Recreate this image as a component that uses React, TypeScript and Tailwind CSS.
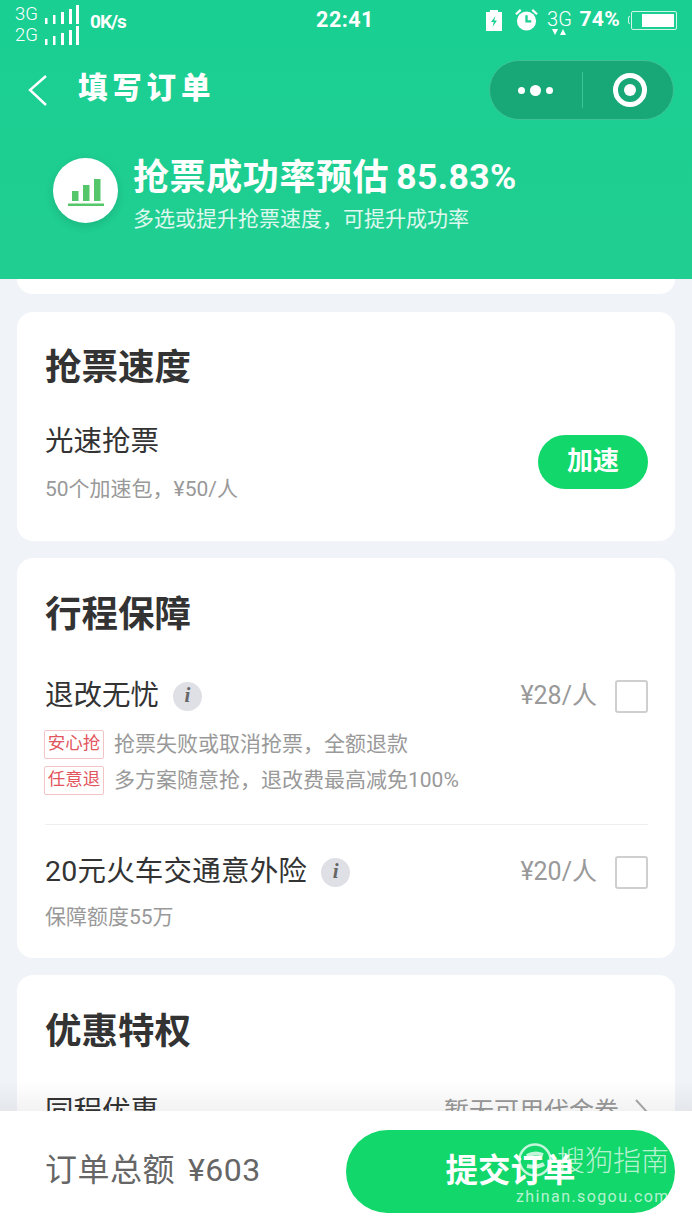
const FONT = "font-['Roboto','Noto_Sans_CJK_SC',sans-serif]";

function Signal({ label }: { label: string }) {
  return (
    <div className="flex items-end h-[21px]">
      <span className="text-[18.5px] leading-[20px] font-light w-[30px]">{label}</span>
      <svg width="34" height="19" viewBox="0 0 34 19" fill="#fff">
        <rect x="0" y="13" width="2.5" height="6" />
        <rect x="8" y="10" width="2.5" height="9" />
        <rect x="16" y="7" width="3" height="12" />
        <rect x="24" y="4" width="3" height="15" />
        <rect x="31" y="0" width="3" height="19" />
      </svg>
    </div>
  );
}

function StatusBar() {
  return (
    <div className="grid grid-cols-[1fr_auto_1fr] items-center h-[46px] pl-[15px] pr-[15px] text-white">
      <div className="flex items-center">
        <div className="flex flex-col mt-[1px]">
          <Signal label="3G" />
          <Signal label="2G" />
        </div>
        <span className="ml-[11px] text-[19px] font-bold tracking-[-1px] -mt-[2px]">0K/s</span>
      </div>
      <span className="text-[21.5px] font-bold tracking-[0.5px] -mt-[6px] -ml-[2px]">22:41</span>
      <div className="flex items-center justify-end -mt-[6px]">
        <svg width="16" height="21" viewBox="0 0 16 21" fill="#fff">
          <path d="M4 0h8v2h4v19H0V2h4z" />
          <path d="M9.5 6 5 12h2.8L6.5 17 11 10.5H8.2z" fill="#1ccf92" />
        </svg>
        <svg className="ml-[13px]" width="23" height="24" viewBox="0 0 24 24" fill="none">
          <circle cx="12" cy="13" r="10" fill="#fff" />
          <path d="M12 7v6.5h5" stroke="#1ccf92" strokeWidth="2.4" />
          <path d="M1 6 6 1.5M23 6l-5-4.5" stroke="#fff" strokeWidth="2.4" />
        </svg>
        <div className="ml-[9px] flex flex-col items-center w-[24px] mt-[3px]">
          <span className="text-[20px] leading-[20px] font-light">3G</span>
          <svg width="14" height="6" viewBox="0 0 14 6" fill="#fff">
            <path d="M0 0h6L3 6zM8 6h6l-3-6z" />
          </svg>
        </div>
        <span className="ml-[8px] text-[21px] font-bold tracking-[0.3px]">74%</span>
        <div className="ml-[8px] flex items-center">
          <div className="w-[2px] h-[8px] border border-r-0 border-white/80 rounded-l-[2px]" />
          <div className="w-[46px] h-[19px] border border-white/80 rounded-[2px] flex justify-end p-[2px] ml-[1px]">
            <div className="w-[32px] bg-white" />
          </div>
        </div>
      </div>
    </div>
  );
}

function NavBar() {
  return (
    <div className="flex items-center justify-between h-[60px] mt-[14px] pl-[28px] pr-[18px]">
      <div className="flex items-center">
        <svg width="20" height="32" viewBox="0 0 20 32" fill="none" stroke="#fff" strokeWidth="2.4">
          <path d="M18 2 2 16l16 15" />
        </svg>
        <span className="ml-[30px] text-[29.5px] leading-none font-black tracking-[4.8px] text-white -mt-[3px]">填写订单</span>
      </div>
      <div className="flex items-center w-[185px] h-[60px] rounded-full bg-[#18a777] border border-[#3dc397]">
        <div className="w-[90px] flex items-center justify-center gap-[5px]">
          <span className="w-[7px] h-[7px] rounded-full bg-white" />
          <span className="w-[11px] h-[11px] rounded-full bg-white" />
          <span className="w-[7px] h-[7px] rounded-full bg-white" />
        </div>
        <div className="w-px h-[36px] ml-[2px] bg-[#3dc397]" />
        <div className="flex-1 flex items-center justify-center pl-[4px]">
          <div className="w-[34px] h-[34px] rounded-full border-[5px] border-white flex items-center justify-center">
            <div className="w-[12px] h-[12px] rounded-full bg-white" />
          </div>
        </div>
      </div>
    </div>
  );
}

function Banner() {
  return (
    <div className="flex items-start pl-[53px] pt-[26px] h-[159px]">
      <div className="mt-[12px] w-[65px] h-[65px] rounded-full bg-white shadow-[0_3px_10px_rgba(0,0,0,0.12)] flex items-center justify-center">
        <svg className="mt-[2px]" width="36" height="31" viewBox="0 0 36 31" fill="#55c76a">
          <rect x="4" y="15" width="6.5" height="10" />
          <rect x="15" y="9" width="6.5" height="16" />
          <rect x="26" y="3" width="6.5" height="22" />
          <rect x="0" y="27.5" width="36" height="2.5" />
        </svg>
      </div>
      <div className="ml-[15px] mt-[10px] text-white">
        <div className="flex items-center h-[44px] font-bold text-[36px] leading-none tracking-[0.6px]">
          抢票成功率预估<span className="ml-[7px] text-[35.5px] tracking-[0.4px]">85.83%</span>
        </div>
        <div className="mt-[4px] text-[21px] leading-[30px] text-white/85">多选或提升抢票速度，可提升成功率</div>
      </div>
    </div>
  );
}

function Card({ title, children, className = "" }: { title: string; children: React.ReactNode; className?: string }) {
  return (
    <div className={`bg-white rounded-[16px] pl-[28px] pr-[27px] ${className}`}>
      <h2 className="text-[36.5px] leading-[44px] font-bold text-[#333]">{title}</h2>
      {children}
    </div>
  );
}

function Info() {
  return (
    <span className="ml-[14px] w-[29px] h-[29px] rounded-full bg-[#dfe0e6] flex items-center justify-center text-[#666] text-[21px] font-bold italic font-['Liberation_Serif',serif]">
      i
    </span>
  );
}

function Check() {
  return <span className="ml-[18px] w-[33px] h-[33px] rounded-[3px] border-2 border-[#cfcfcf] bg-white" />;
}

function Tag({ label, text }: { label: string; text: string }) {
  return (
    <div className="flex items-center h-[30px] -ml-[1px]">
      <span className="w-[60px] h-[29px] flex items-center justify-center border border-[#f3c4c6] rounded-[2px] text-[#e2555d] text-[17.5px] leading-none">{label}</span>
      <span className="ml-[10px] mt-[2px] text-[21px] text-[#999]">{text}</span>
    </div>
  );
}

export default function App() {
  return (
    <div className={`${FONT} w-[692px] h-[1230px] overflow-hidden flex flex-col bg-[#f0f3f8]`}>
      <header className="h-[279px] shrink-0 bg-gradient-to-b from-[#19cf92] to-[#21ce91] z-10">
        <StatusBar />
        <NavBar />
        <Banner />
      </header>

      <main className="relative flex-1 min-h-0 overflow-hidden px-[17px]">
        <div className="h-[15px] bg-white rounded-b-[16px]" />

        <Card title="抢票速度" className="mt-[18px] h-[229px] pt-[34px]">
          <div className="flex items-center justify-between mt-[32px]">
            <div>
              <div className="text-[28.5px] leading-[40px] text-[#333]">光速抢票</div>
              <div className="mt-[12px] text-[21px] leading-[30px] text-[#999]">50个加速包，¥50/人</div>
            </div>
            <button className="w-[110px] h-[54px] rounded-full bg-[#12d76b] text-white text-[26px] font-bold -mt-[3px]">加速</button>
          </div>
        </Card>

        <Card title="行程保障" className="mt-[17px] h-[400px] pt-[35px]">
          <div className="flex items-center justify-between mt-[39px] h-[40px]">
            <div className="flex items-center">
              <span className="text-[28.5px] text-[#333]">退改无忧</span>
              <Info />
            </div>
            <div className="flex items-center">
              <span className="text-[25px] text-[#999]">¥28/人</span>
              <Check />
            </div>
          </div>
          <div className="mt-[13px] flex flex-col gap-[6px]">
            <Tag label="安心抢" text="抢票失败或取消抢票，全额退款" />
            <Tag label="任意退" text="多方案随意抢，退改费最高减免100%" />
          </div>
          <div className="mt-[29px] border-t border-[#eeeeee]" />
          <div className="flex items-center justify-between mt-[27px] h-[40px]">
            <div className="flex items-center">
              <span className="text-[28.5px] text-[#333] tracking-[0.2px]">20元火车交通意外险</span>
              <Info />
            </div>
            <div className="flex items-center">
              <span className="text-[25px] text-[#999]">¥20/人</span>
              <Check />
            </div>
          </div>
          <div className="mt-[10px] text-[21px] leading-[30px] text-[#999]">保障额度55万</div>
        </Card>

        <Card title="优惠特权" className="mt-[17px] h-[300px] pt-[35px]">
          <div className="flex items-center justify-between mt-[38px] h-[40px]">
            <span className="text-[28.5px] text-[#333]">同程优惠</span>
            <div className="flex items-center text-[#999]">
              <span className="text-[25px]">暂无可用代金券</span>
              <svg className="ml-[16px]" width="13" height="26" viewBox="0 0 13 26" fill="none" stroke="#aaa" strokeWidth="2">
                <path d="m1 1 11 12L1 25" />
              </svg>
            </div>
          </div>
        </Card>

        <div className="absolute left-0 right-0 bottom-0 h-[30px] bg-gradient-to-b from-transparent to-black/5" />
      </main>

      <footer className="relative h-[119px] shrink-0 bg-white flex items-center justify-between pl-[45px] pr-[17px]">
        <div className="text-[32px] text-[#666] flex items-center tracking-[0.5px] -mt-[2px]">
          订单总额<span className="ml-[13px]">¥603</span>
        </div>
        <button className="w-[329px] h-[83px] rounded-full bg-[#12d76b] text-white text-[32.5px] font-bold mt-[1px]">提交订单</button>
        <div className="absolute left-[516px] top-[29px] text-white/70 pointer-events-none">
          <div className="flex items-center h-[44px] pl-[2px]">
            <svg className="-mt-[4px]" width="34" height="34" viewBox="0 0 34 34" fill="none" stroke="#fff" strokeOpacity="0.75" strokeWidth="2.5">
              <circle cx="17" cy="17" r="15.5" />
              <path d="M9 13c5-3 11-3 16-1M9 23c5 1 12 1 17-2" strokeWidth="4" />
            </svg>
            <span className="ml-[5px] text-[28px] leading-none font-light">搜狗指南</span>
          </div>
          <div className="mt-[3px] text-[16px] leading-[20px] tracking-[1.4px] whitespace-nowrap">zhinan.sogou.com</div>
        </div>
      </footer>
    </div>
  );
}
